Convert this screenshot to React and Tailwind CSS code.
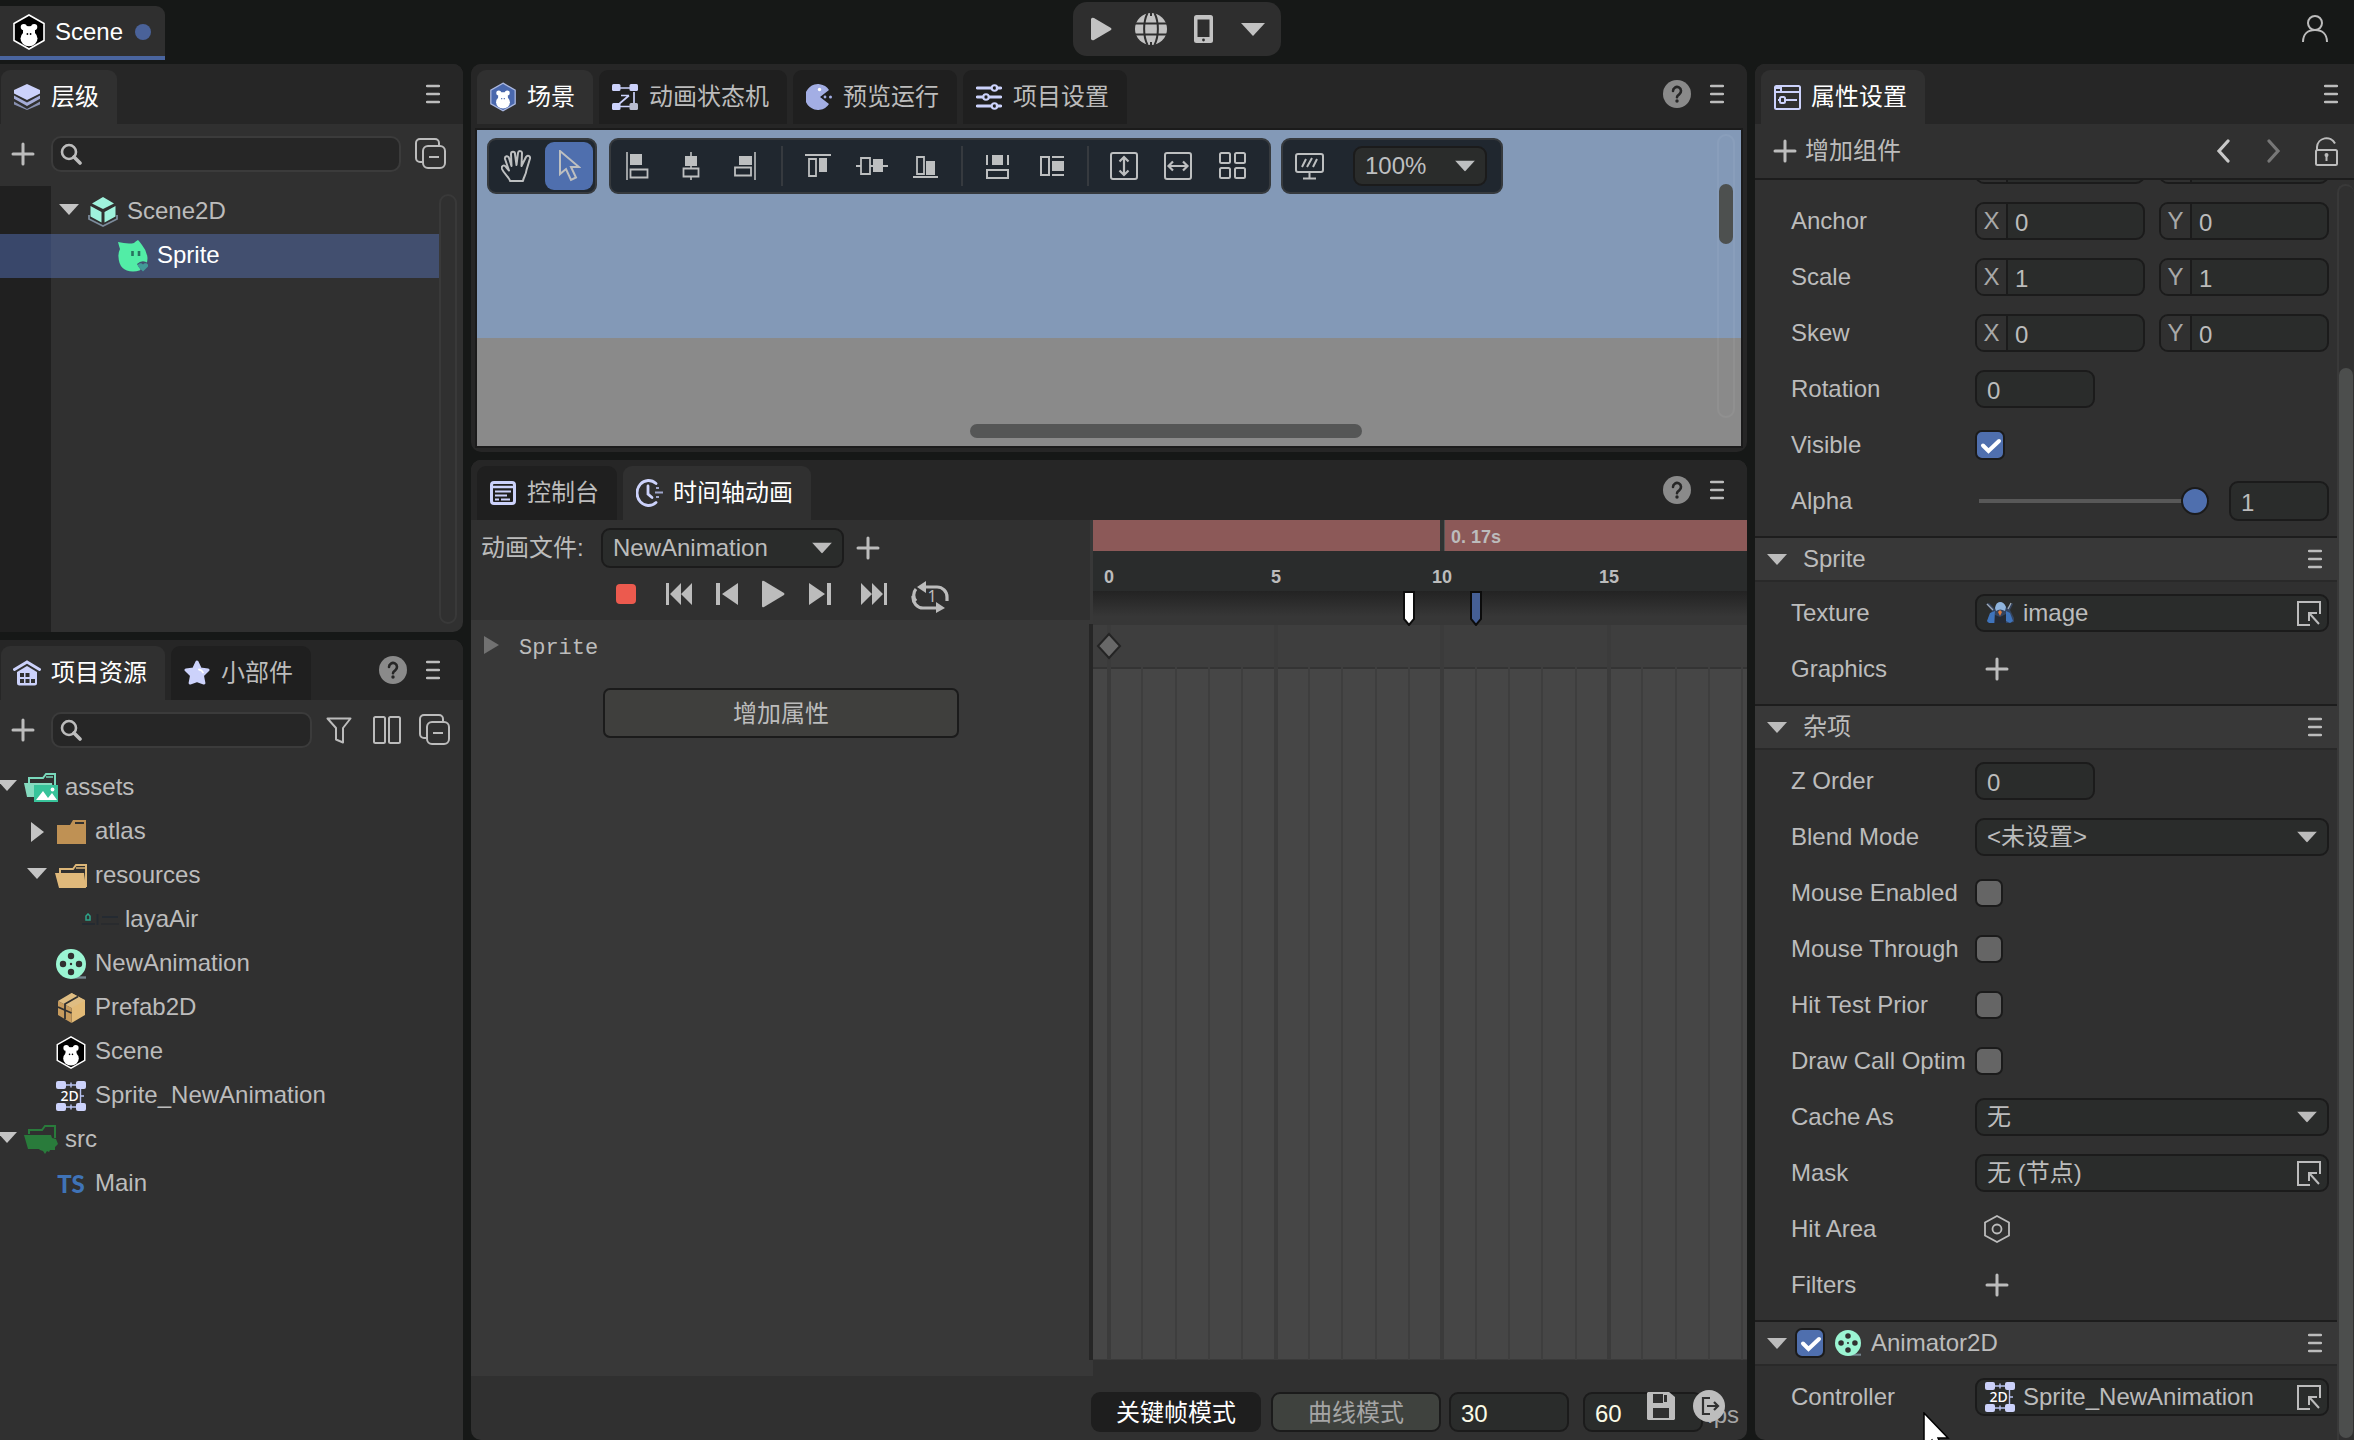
import React, { useId } from 'react';

/* ---------- icons ---------- */

function Svg({ w, h, children, className = '' }) {
  return (
    <svg width={w} height={h} viewBox={`0 0 ${w} ${h}`} fill="none" className={`shrink-0 ${className}`} aria-hidden="true">
      {children}
    </svg>
  );
}

const DownArrow = ({ className = '' }) => (
  <Svg w={20} h={11} className={className}><path d="M0 0h20L10 11z" fill="currentColor" /></Svg>
);
const RightArrow = () => (
  <Svg w={13} h={20}><path d="M0 0v20l13-10z" fill="currentColor" /></Svg>
);
const Plus = () => (
  <Svg w={24} h={24}><path d="M12 2v20M2 12h20" stroke="currentColor" strokeWidth="3" strokeLinecap="round" /></Svg>
);
const Menu = () => (
  <Svg w={14} h={20}><path d="M1 2h12M1 10h12M1 18h12" stroke="currentColor" strokeWidth="2.4" strokeLinecap="round" /></Svg>
);
const Help = () => (
  <Svg w={28} h={28}>
    <circle cx="14" cy="14" r="14" fill="#8a8a8a" />
    <path d="M10 11a4 4 0 1 1 6.200 3.300c-1.500 1-2.200 1.500-2.200 3" stroke="#262626" strokeWidth="2.6" strokeLinecap="round" />
    <circle cx="14" cy="21" r="1.700" fill="#262626" />
  </Svg>
);
const Search = () => (
  <Svg w={22} h={22}>
    <circle cx="9" cy="9" r="7" stroke="currentColor" strokeWidth="2.6" />
    <path d="M14 14l6 6" stroke="currentColor" strokeWidth="3.600" strokeLinecap="round" />
  </Svg>
);
const Collapse = () => (
  <Svg w={32} h={32}>
    <path d="M7 24H5a4 4 0 0 1-4-4V5a4 4 0 0 1 4-4h15a4 4 0 0 1 4 4v2" stroke="currentColor" strokeWidth="2" />
    <rect x="8" y="8" width="22" height="22" rx="5" stroke="currentColor" strokeWidth="2" />
    <path d="M14 19h10" stroke="currentColor" strokeWidth="2.200" />
  </Svg>
);
const Filter = () => (
  <Svg w={26} h={27}><path d="M1.500 1.500h23L17 11v14.500l-7-3V11z" stroke="currentColor" strokeWidth="2" strokeLinejoin="round" /></Svg>
);
const Columns = () => (
  <Svg w={28} h={28}>
    <rect x="1" y="1" width="11" height="26" rx="1.500" stroke="currentColor" strokeWidth="2" />
    <rect x="16" y="1" width="11" height="26" rx="1.500" stroke="currentColor" strokeWidth="2" />
  </Svg>
);

function Monkey({ w = 30, h = 33, fill = '#000', stroke = '#fff' }) {
  return (
    <svg width={w} height={h} viewBox="0 0 32 36" fill="none" className="shrink-0" aria-hidden="true">
      <path d="M16 1l15 8.500v17L16 35 1 26.500v-17z" fill={fill} stroke={stroke} strokeWidth="1.600" />
      <circle cx="10.800" cy="13" r="3.100" fill="#fff" />
      <circle cx="21.200" cy="13" r="3.100" fill="#fff" />
      <path d="M11 11.500q5 1.500 10 0l1 5v5H10v-5z" fill="#fff" />
      <ellipse cx="16" cy="24.500" rx="8.500" ry="7.700" fill="#fff" />
      <circle cx="14.400" cy="20" r="0.900" fill={fill} />
      <circle cx="17.600" cy="20" r="0.900" fill={fill} />
    </svg>
  );
}

const Layers = () => (
  <Svg w={26} h={26}>
    <path d="M0 17.500l13 7.500 13-7.500v3L13 26 0 20.500z" fill="#8890b0" />
    <path d="M0 11.500l13 7 13-7v3.200L13 22 0 14.700z" fill="#a5acd6" />
    <path d="M13 0l13 6v3.500L13 16 0 9.500V6z" fill="#ccd2fb" />
  </Svg>
);
const House = () => (
  <Svg w={28} h={26}>
    <path d="M1.500 9.500L14 2l12.500 7.500" stroke="#ccd2fb" strokeWidth="3" strokeLinecap="round" />
    <path d="M14 6l10 6v11a2.500 2.500 0 0 1-2.500 2.500h-15A2.500 2.500 0 0 1 4 23V12z" fill="#ccd2fb" />
    <path d="M7 13h4v4H7zM12.500 13h4v4h-4zM7 19h4v4H7zM12.500 19h4v4h-4zM18 19h4v4h-4z" fill="#303030" />
  </Svg>
);
const Star = () => (
  <Svg w={26} h={26}>
    <path d="M13 2l3.300 7 7.700 1-5.600 5.300 1.500 7.700L13 20.500 6.100 23l1.500-7.700L2 10l7.700-1z" fill="#ccd2fb" stroke="#ccd2fb" strokeWidth="3" strokeLinejoin="round" />
    <path d="M15 9.500q3 .5 4 3" stroke="#fff" strokeWidth="1.800" strokeLinecap="round" />
  </Svg>
);
const StateMachine = () => (
  <Svg w={26} h={26}>
    <path d="M8 4h11M8 22.500h11M22 8v11M17 11.500H9M17 11.500L7 20" stroke="#ccd2fb" strokeWidth="1.700" />
    <rect x="0" y="0" width="8.500" height="7" rx="1.500" fill="#ccd2fb" />
    <rect x="17.500" y="0" width="8.500" height="7" rx="1.500" fill="#ccd2fb" />
    <rect x="0" y="19" width="8.500" height="7" rx="1.500" fill="#ccd2fb" />
    <rect x="17.500" y="19" width="8.500" height="7" rx="1.500" fill="#b8bccf" />
  </Svg>
);
const Pac = () => (
  <Svg w={26} h={26}>
    <path d="M23 6A13 13 0 1 0 23 20L14 13z" fill="#a3aee4" />
    <circle cx="13.500" cy="5.500" r="1.700" fill="#fff" />
    <circle cx="19" cy="13" r="1.400" fill="#a3aee4" />
    <circle cx="24.500" cy="13" r="1.500" fill="#a3aee4" />
  </Svg>
);
const Sliders = () => (
  <Svg w={26} h={26}>
    <path d="M1.300 4H15M21 4h3.700M1.300 13H7M13 13h11.700M1.300 22H15M21 22h3.700" stroke="#ccd2fb" strokeWidth="2.800" strokeLinecap="round" />
    <circle cx="18.500" cy="4" r="2.800" stroke="#ccd2fb" strokeWidth="2" />
    <circle cx="10" cy="13" r="2.800" stroke="#ccd2fb" strokeWidth="2" />
    <circle cx="18.500" cy="22" r="2.800" stroke="#ccd2fb" strokeWidth="2" />
  </Svg>
);
const ConsoleIcon = () => (
  <Svg w={26} h={24}>
    <rect x="1.500" y="1.500" width="23" height="21" rx="2.500" stroke="#ccd2fb" strokeWidth="3" />
    <path d="M1 6h24" stroke="#ccd2fb" strokeWidth="2.400" />
    <path d="M5 10.500h16M5 14.500h12M5 18.500h4M11 18.500h9" stroke="#ccd2fb" strokeWidth="1.800" />
  </Svg>
);
const ClockIcon = () => (
  <Svg w={27} h={28}>
    <path d="M20 4.500A11.500 12.500 0 1 0 20 23.500" stroke="#ccd2fb" strokeWidth="2.800" strokeLinecap="round" />
    <path d="M12 7v8l4 3.500" stroke="#ccd2fb" strokeWidth="2.800" strokeLinecap="round" />
    <path d="M20 9h3M19 13.500h8M20 18h3" stroke="#9fa6cc" strokeWidth="2" />
  </Svg>
);
const PropsIcon = () => (
  <Svg w={27} h={25}>
    <rect x="1" y="1" width="25" height="23" rx="1.500" stroke="#ccd2fb" strokeWidth="2" />
    <path d="M1 7h25M1 3h6v4H1z" stroke="#ccd2fb" strokeWidth="2" />
    <path d="M4 15h2M11 15h12" stroke="#ccd2fb" strokeWidth="2.200" />
    <rect x="6" y="12" width="5" height="6" rx="1.500" stroke="#ccd2fb" strokeWidth="2" />
  </Svg>
);

const Cube = () => (
  <Svg w={30} h={30}>
    <path d="M1 18v4l14 7 14-7v-4" stroke="#7b8a9a" strokeWidth="1.800" />
    <path d="M15 0l11 6.500L15 12 4 6.500zM2.500 9l11 6v10.500l-11-6zM27.500 9l-11 6v10.500l11-6z" fill="#9ff2dc" />
  </Svg>
);
const SpriteIcon = () => (
  <Svg w={30} h={32}>
    <path d="M0 2q6 1 11 1.500 3 0 5-.5 2-2 4-3 2 2 4 5 5 6 5.500 13 0 13-14.500 13.500Q1 31 0.500 17 0 13 2 9 1 6 0 2z" fill="#52eda6" />
    <path d="M19 24q5-5 11-1v5l-6 4z" fill="#424f6f" />
    <path d="M25 31.500l-5-5c-1-3 3-4.500 5-2 2-2.500 6-1 5 2z" fill="#429a98" />
    <path d="M14.500 11v5M21 11v5" stroke="#28725f" strokeWidth="2.600" />
  </Svg>
);
const AssetsFolder = () => (
  <Svg w={34} h={30}>
    <path d="M5 10V5h14l3-4h9v12" stroke="#79d8bb" strokeWidth="2" />
    <path d="M22 4h7" stroke="#79d8bb" strokeWidth="1.500" />
    <path d="M0 10h28l2 14H3z" fill="#86dabf" />
    <rect x="10" y="12" width="24" height="17" fill="#38c39a" />
    <path d="M12 27l7-9 5 7 4-5 5 7z" fill="#fff" />
    <circle cx="28.500" cy="16.500" r="1.900" fill="#fff" />
  </Svg>
);
const ClosedFolder = () => (
  <Svg w={29} h={24}>
    <path d="M0 5h13l3-5h13v24H0z" fill="#bf9154" />
    <path d="M18 3h9" stroke="#303030" strokeWidth="2" />
  </Svg>
);
const OpenFolder = () => (
  <Svg w={32} h={24}>
    <path d="M5 9V5h13l3-4h10v22" stroke="#dcb678" strokeWidth="2" />
    <path d="M21 4h9" stroke="#dcb678" strokeWidth="1.500" />
    <path d="M0 9h29l2 15H4z" fill="#e0b97b" />
  </Svg>
);
const SrcFolder = () => (
  <Svg w={34} h={30}>
    <path d="M5 9V5h13l3-4h10v12" stroke="#297b3b" strokeWidth="2" />
    <path d="M0 10h27l1 3 4 1 2 5-3 3v3h-5l-1 2-2-1-2 3-2-3-3-1-1-1H4z" fill="#297b3b" />
  </Svg>
);
const LayaAir = () => (
  <Svg w={38} h={14}>
    <path d="M4 6V3l2-2 2 2v4H4V6" stroke="#2ea58a" strokeWidth="1.500" />
    <path d="M0 11h13M15.500 1v11M20 4h16" stroke="#242a31" strokeWidth="2" />
    <path d="M19 11h18" stroke="#292b2e" strokeWidth="2" />
  </Svg>
);
function Reel({ size = 30 }) {
  return (
    <svg width={size} height={size} viewBox="0 0 30 30" className="shrink-0" aria-hidden="true">
      <path d="M16 28.500h14" stroke="#74868f" strokeWidth="2.400" />
      <circle cx="15" cy="15" r="15" fill="#9bf5d3" />
      <g fill="#303030">
        <circle cx="15" cy="7" r="3.200" /><circle cx="15" cy="23" r="3.200" />
        <circle cx="7" cy="15" r="3.200" /><circle cx="23" cy="15" r="3.200" />
        <circle cx="15" cy="15" r="1.200" />
      </g>
    </svg>
  );
}
const Box = () => (
  <Svg w={27} h={30}>
    <path d="M13.500 0L27 7v15l-13.500 8z" fill="#e2ba76" />
    <path d="M0 8l13.500 7v15L0 22z" fill="#c79b5d" />
    <path d="M13.500 0L27 7.500 13.500 15 0 8z" fill="#dfbd82" />
    <path d="M20 3.500L7 11v15M0 14l13.500 6" stroke="#303030" strokeWidth="1.800" />
  </Svg>
);
const TwoD = () => (
  <Svg w={30} h={30}>
    <path d="M9 4h12M9 26h12M24.500 8v14M15 1.500v5M15 23.500v5M24 15h4" stroke="#b8c3f2" strokeWidth="1.400" />
    <rect x="0" y="0" width="10" height="8" rx="2" fill="#ccd2fb" />
    <rect x="20" y="0" width="10" height="8" rx="2" fill="#ccd2fb" />
    <rect x="0" y="22" width="10" height="8" rx="2" fill="#ccd2fb" />
    <rect x="20" y="22" width="10" height="8" rx="2" fill="#ccd2fb" />
    <text x="13.500" y="20" textAnchor="middle" fontSize="14" fontFamily="'Noto Sans', sans-serif" fontWeight="500" fill="#fff">2D</text>
  </Svg>
);
const Pick = () => (
  <Svg w={24} h={25}>
    <path d="M13 24H1V1h22v12" stroke="currentColor" strokeWidth="2" />
    <path d="M12 20v-8h8M13 13l9 10" stroke="currentColor" strokeWidth="2" />
  </Svg>
);
const Hexagon = () => (
  <Svg w={26} h={28}>
    <path d="M13 1l12 6.500v13L13 27 1 20.500v-13z" stroke="currentColor" strokeWidth="1.800" />
    <circle cx="13" cy="14" r="4.500" stroke="currentColor" strokeWidth="1.800" />
  </Svg>
);
const Avatar = () => (
  <Svg w={28} h={22}>
    <path d="M0 2l3-1 4 4 2 2q2-7 5-7t6 6l3-2 3-3 1 1-3 6 4 8 0 4-5 1H5l-4-1 2-6 3-5z" fill="#34445f" />
    <path d="M9 6q1-6 5-6t6 5l-1 4q-5-3-9 0z" fill="#8fb4dd" />
    <path d="M1 19l3-8 5-2-1 12H3zM27 19l-3-8-4-2 0 10 4 2z" fill="#3f74bb" />
    <path d="M9 13l5 2 6-3v9H9z" fill="#252a33" />
    <path d="M14 8l2 2-2 4-2-4z" fill="#dd7a3c" />
    <path d="M1 2l6 6M22 7l3-6" stroke="#a3adb8" strokeWidth="1.300" />
  </Svg>
);

/* ---------- shared controls ---------- */

const fieldBox = 'rounded-[9px] border-2 border-[#1b1b1b] bg-[#2a2c2b] outline-none';

function IconButton({ label, children, className = '' }) {
  return (
    <button type="button" aria-label={label} className={`flex shrink-0 items-center justify-center ${className}`}>
      {children}
    </button>
  );
}

function Tab({ icon, children, active }) {
  return (
    <button
      type="button"
      role="tab"
      aria-selected={!!active}
      className={`flex h-[54px] items-center gap-2.5 rounded-t-[9px] pl-3 pr-[18px] ${active ? 'bg-[#303030] text-white' : 'bg-[#1f1f1f]'}`}
    >
      <span className="flex w-7 shrink-0 justify-center">{icon}</span>
      {children}
    </button>
  );
}

function PanelHeader({ children, help, className = 'pl-1.5 pr-[23px]' }) {
  return (
    <header className={`flex h-[60px] shrink-0 items-end bg-[#262626] ${className}`}>
      <div role="tablist" className="flex gap-1.5">{children}</div>
      <div className="ml-auto flex h-full items-center gap-[19px]">
        {help && <IconButton label="帮助"><Help /></IconButton>}
        <IconButton label="菜单"><Menu /></IconButton>
      </div>
    </header>
  );
}

function SearchBox({ label }) {
  return (
    <div className="flex h-9 min-w-0 flex-1 items-center gap-2 rounded-[10px] border-2 border-[#3b3b3b] bg-[#262626] pl-[7px]">
      <Search />
      <input type="text" aria-label={label} className="w-full min-w-0 bg-transparent pr-2 outline-none" />
    </div>
  );
}

function Select({ value, id, label, className = '' }) {
  return (
    <div className={`relative flex ${className}`}>
      <select id={id} aria-label={label} className={`h-full w-full appearance-none pl-2.5 pr-9 ${fieldBox}`}>
        <option>{value}</option>
      </select>
      <DownArrow className="pointer-events-none absolute right-3 top-1/2 -translate-y-1/2" />
    </div>
  );
}

function Checkbox({ id, label, checked }) {
  return (
    <span className="relative inline-flex shrink-0">
      <input
        id={id}
        type="checkbox"
        aria-label={label}
        defaultChecked={checked}
        className="peer size-7 appearance-none rounded-[7px] border-2 border-[#1b1b1b] bg-[#656565] checked:size-[30px] checked:bg-[#4f6fae]"
      />
      <svg viewBox="0 0 30 30" className="pointer-events-none absolute inset-0 hidden size-[30px] peer-checked:block" aria-hidden="true">
        <path d="M8 15.500l5.500 5.500L24 11" fill="none" stroke="#fff" strokeWidth="4" strokeLinecap="round" />
      </svg>
    </span>
  );
}

/* ---------- trees ---------- */

const indents = ['pl-0', 'pl-[30px]', 'pl-[60px]'];

function TreeRow({ level = 0, arrow, icon, children, selected }) {
  return (
    <li className={`flex h-11 items-center gap-3 ${indents[level]} ${selected ? 'bg-[#424f6f] text-white' : ''}`}>
      <span className="flex w-3.5 shrink-0 justify-center text-[#c4c4c4]">
        {arrow === 'down' && <DownArrow className="-mt-1.5" />}
        {arrow === 'right' && <RightArrow />}
      </span>
      <span className="-mr-[3px] flex w-[30px] shrink-0 justify-center">{icon}</span>
      <span className="pb-0.5">{children}</span>
    </li>
  );
}

function Hierarchy() {
  return (
    <section className="flex h-[568px] shrink-0 flex-col overflow-hidden rounded-r-[10px] bg-[#303030]">
      <PanelHeader className="pl-px pr-[23px]">
        <Tab icon={<Layers />} active>层级</Tab>
      </PanelHeader>
      <div className="flex h-[62px] shrink-0 items-center pb-0.5 pl-[11px] pr-4">
        <IconButton label="新建" className="mr-4"><Plus /></IconButton>
        <SearchBox label="搜索节点" />
        <IconButton label="全部折叠" className="ml-3.5"><Collapse /></IconButton>
      </div>
      <div className="flex flex-1">
        <div className="w-[51px] shrink-0 bg-[#202020] pt-12">
          <div className="h-11 bg-[#39476a]" />
        </div>
        <ul className="flex-1 pt-1">
          <li>
            <div className="pl-[11px]"><ul><TreeRow arrow="down" icon={<Cube />}>Scene2D</TreeRow></ul></div>
          </li>
          <li className="bg-[#424f6f]">
            <div className="pl-[11px]"><ul><TreeRow level={1} icon={<SpriteIcon />} selected>Sprite</TreeRow></ul></div>
          </li>
        </ul>
        <div className="mb-2 mr-1.5 mt-2 w-[18px] rounded-full border-2 border-[#393939]" />
      </div>
    </section>
  );
}

function Project() {
  return (
    <section className="flex min-h-0 flex-1 flex-col overflow-hidden rounded-tr-[10px] bg-[#303030]">
      <PanelHeader help className="pl-px pr-[23px]">
        <Tab icon={<House />} active>项目资源</Tab>
        <Tab icon={<Star />}>小部件</Tab>
      </PanelHeader>
      <div className="flex h-[62px] shrink-0 items-center pb-0.5 pl-[11px] pr-3">
        <IconButton label="新建" className="mr-4"><Plus /></IconButton>
        <SearchBox label="搜索资源" />
        <IconButton label="筛选" className="ml-3.5"><Filter /></IconButton>
        <IconButton label="布局" className="ml-[21px]"><Columns /></IconButton>
        <IconButton label="全部折叠" className="ml-[18px]"><Collapse /></IconButton>
      </div>
      <ul className="pt-1">
        <TreeRow arrow="down" icon={<AssetsFolder />}>assets</TreeRow>
        <TreeRow level={1} arrow="right" icon={<ClosedFolder />}>atlas</TreeRow>
        <TreeRow level={1} arrow="down" icon={<OpenFolder />}>resources</TreeRow>
        <TreeRow level={2} icon={<LayaAir />}>layaAir</TreeRow>
        <TreeRow level={1} icon={<Reel />}>NewAnimation</TreeRow>
        <TreeRow level={1} icon={<Box />}>Prefab2D</TreeRow>
        <TreeRow level={1} icon={<Monkey />}>Scene</TreeRow>
        <TreeRow level={1} icon={<TwoD />}>Sprite_NewAnimation</TreeRow>
        <TreeRow arrow="down" icon={<SrcFolder />}>src</TreeRow>
        <TreeRow level={1} icon={<span className="font-['Lato',sans-serif] font-black text-[#3f73b7]">TS</span>}>Main</TreeRow>
      </ul>
    </section>
  );
}

/* ---------- scene view ---------- */

const alignGroups = [
  [
    ['左对齐', <><path d="M1 0v28" stroke="currentColor" strokeWidth="1.600" /><path d="M4 2h12v11H4z" fill="currentColor" /><path d="M4.500 17.500h17v8h-17z" stroke="currentColor" strokeWidth="1.800" /></>, 24],
    ['水平居中', <><path d="M9 0v28" stroke="currentColor" strokeWidth="1.600" /><path d="M3 4h12v10H3z" fill="currentColor" /><path d="M1.500 16.500h15v8h-15z" fill="#20272f" stroke="currentColor" strokeWidth="1.800" /></>, 20],
    ['右对齐', <><path d="M21 0v28" stroke="currentColor" strokeWidth="1.600" /><path d="M5 4h13v9H5z" fill="currentColor" /><path d="M1 15.500h16v8H1z" stroke="currentColor" strokeWidth="1.800" /></>, 24],
  ],
  [
    ['顶对齐', <><path d="M0 3h26" stroke="currentColor" strokeWidth="2" /><path d="M14 6h8v14h-8z" fill="currentColor" /><path d="M4 7h7v17H4z" stroke="currentColor" strokeWidth="1.800" /></>, 26],
    ['垂直居中', <><path d="M0 14h32" stroke="currentColor" strokeWidth="1.800" /><path d="M17 7h10v13H17z" fill="currentColor" /><path d="M5 6h9v16H5z" fill="#20272f" stroke="currentColor" strokeWidth="1.800" /></>, 32],
    ['底对齐', <><path d="M0 25h25" stroke="currentColor" strokeWidth="2" /><path d="M13 9h9v14h-9z" fill="currentColor" /><path d="M4 5h7v17H4z" stroke="currentColor" strokeWidth="1.800" /></>, 26],
  ],
  [
    ['水平分布', <><path d="M1 3v10M22 3v10" stroke="currentColor" strokeWidth="2" /><path d="M6 3h11v10H6z" fill="currentColor" /><path d="M1 18h21v8H1z" stroke="currentColor" strokeWidth="2" /></>, 24],
    ['垂直分布', <><path d="M12 5h12M12 23h12" stroke="currentColor" strokeWidth="2" /><path d="M12 9h12v10H12z" fill="currentColor" /><path d="M1 5h8v18H1z" stroke="currentColor" strokeWidth="2" /></>, 24],
  ],
  [
    ['等高', <><rect x="1" y="1" width="26" height="26" rx="2" stroke="currentColor" strokeWidth="2" /><path d="M14 6v16M9.500 9.500L14 5l4.500 4.500M9.500 18.500L14 23l4.500-4.500" stroke="currentColor" strokeWidth="2.200" /></>, 28],
    ['等宽', <><rect x="1" y="1" width="26" height="26" rx="2" stroke="currentColor" strokeWidth="2" /><path d="M5 14h18M9 9.500L4.500 14 9 18.500M19 9.500l4.500 4.500-4.500 4.500" stroke="currentColor" strokeWidth="2.200" /></>, 28],
    ['网格', <><g stroke="currentColor" strokeWidth="2"><rect x="1" y="1" width="10" height="10" rx="1.500" /><rect x="16" y="1" width="10" height="10" rx="1.500" /><rect x="1" y="16" width="10" height="10" rx="1.500" /><rect x="16" y="16" width="10" height="10" rx="1.500" /></g></>, 27],
  ],
];

const toolBox = 'flex h-14 items-center rounded-[9px] border-2 border-[#363a3e] bg-[#20272f] text-[#bdbfc0]';

function SceneView() {
  return (
    <section className="flex h-[388px] shrink-0 flex-col overflow-hidden rounded-[10px] bg-[#262626]">
      <PanelHeader help>
        <Tab icon={<Monkey w={26} h={34} fill="#4a68ad" stroke="#a9b6de" />} active>场景</Tab>
        <Tab icon={<StateMachine />}>动画状态机</Tab>
        <Tab icon={<Pac />}>预览运行</Tab>
        <Tab icon={<Sliders />}>项目设置</Tab>
      </PanelHeader>
      <div className="relative mx-1 mb-1 mt-1 flex flex-1 flex-col border-2 border-[#1b1b1b]">
        <div className="h-[208px] shrink-0 bg-[#8399b7] p-2 pl-2.5">
          <div className="flex" role="toolbar" aria-label="场景工具">
            <div className={`${toolBox} mr-3 pr-0.5`}>
              <IconButton label="移动画布" className="h-12 w-14">
                <Svg w={32} h={32}>
                  <path d="M9 31c0-3-6-7-8-12-1-3 2-5 4-2l3 3.500L4 9c-.5-3 3-4 4-1l2.500 8L10 4c0-3 4-3 4 0l1.500 11L17 3c.5-3 4-2 4 0l-.5 13L25 7c1.500-2.500 4.500-1 4 1.500L25.500 20c-.5 5-3 7-3.500 11z" stroke="currentColor" strokeWidth="2" strokeLinejoin="round" />
                </Svg>
              </IconButton>
              <IconButton label="选择" className="h-12 w-12 rounded-[9px] bg-[#4f6fae]">
                <Svg w={24} h={32}>
                  <path d="M3 1v23l6-5 5 11 5-2.500-5-10.500h8z" stroke="currentColor" strokeWidth="2" />
                </Svg>
              </IconButton>
            </div>
            <div className={`${toolBox} mr-2.5 pr-2.5`}>
              {alignGroups.map((group, g) => (
                <React.Fragment key={g}>
                  {g > 0 && <div className="mx-2 h-10 w-0.5 bg-[#363a3f]" />}
                  {group.map(([label, art, w]) => (
                    <IconButton key={label} label={label} className="h-12 w-[54px]"><Svg w={w} h={28}>{art}</Svg></IconButton>
                  ))}
                </React.Fragment>
              ))}
            </div>
            <div className={`${toolBox} pl-3 pr-3.5`}>
              <IconButton label="显示" className="mr-[29px]">
                <Svg w={29} h={27}>
                  <rect x="1" y="1" width="27" height="18" rx="2" stroke="currentColor" strokeWidth="2" />
                  <path d="M7 14l4-8M12 14l5-9M18 14l4-8M14.500 19v6M8 25.500h13" stroke="currentColor" strokeWidth="2" />
                </Svg>
              </IconButton>
              <Select value="100%" label="缩放" className="h-10 w-[134px]" />
            </div>
          </div>
        </div>
        <div className="flex-1 bg-[#8a8a8a]" />
        <div className="absolute bottom-7 right-1.5 top-1 w-[18px] rounded-full border-2 border-white/5" />
        <div className="absolute right-2 top-[54px] h-[60px] w-3.5 rounded-full bg-[#4d504f]" />
        <div className="absolute bottom-2 left-[39%] h-3.5 w-[31%] rounded-full bg-[#555656]" />
      </div>
    </section>
  );
}

/* ---------- timeline ---------- */

const FRAME = 100 / 3;
const ORIGIN = 16;
const frameX = (n) => Math.round(ORIGIN + n * FRAME);

function Marker({ frame, color }) {
  return (
    <svg width="12" height="35" viewBox="0 0 12 35" className="absolute top-0 -translate-x-1/2" style={{ left: frameX(frame) }} aria-hidden="true">
      <path d="M1 1h10v27l-5 6-5-6z" fill={color} stroke="#0c0c0c" strokeWidth="2" />
    </svg>
  );
}

const transport = [
  ['录制', 'mr-[30px]', <Svg w={20} h={20} key="r"><rect width="20" height="20" rx="4" fill="#ec5a4e" /></Svg>],
  ['首帧', 'mr-6', <Svg w={26} h={24} key="f"><path d="M0 1h3v22H0zM15 1v22L4 12zM26 1v22L15 12z" fill="currentColor" /></Svg>],
  ['上一帧', 'mr-6', <Svg w={22} h={24} key="p"><path d="M0 1h4v22H0zM22 1v22L6 12z" fill="currentColor" /></Svg>],
  ['播放', 'mr-6', <Svg w={23} h={28} key="l"><path d="M0 2q0-2 2-1l20 12q1 1 0 2L2 27q-2 1-2-1z" fill="currentColor" /></Svg>],
  ['下一帧', 'mr-[30px]', <Svg w={22} h={24} key="n"><path d="M18 1h4v22h-4zM0 1v22l16-11z" fill="currentColor" /></Svg>],
  ['末帧', 'mr-6', <Svg w={26} h={24} key="e"><path d="M23 1h3v22h-3zM0 1v22l11-11zM11 1v22l11-11z" fill="currentColor" /></Svg>],
];

function Timeline() {
  return (
    <section className="flex min-h-0 flex-1 flex-col overflow-hidden rounded-[10px] bg-[#303030]">
      <PanelHeader help>
        <Tab icon={<ConsoleIcon />}>控制台</Tab>
        <Tab icon={<ClockIcon />} active>时间轴动画</Tab>
      </PanelHeader>
      <div className="flex min-h-0 flex-1">
        <div className="flex w-[622px] shrink-0 flex-col">
          <div className="h-[100px] shrink-0 border-r-[3px] border-[#383838] pl-2.5 pt-2">
            <div className="flex h-10 items-center">
              <label htmlFor="clip" className="w-[120px]">动画文件:</label>
              <Select id="clip" value="NewAnimation" className="h-10 w-[243px]" />
              <IconButton label="新建动画" className="ml-3"><Plus /></IconButton>
            </div>
            <div className="mt-2 flex h-9 items-center pl-[135px]">
              {transport.map(([label, gap, icon]) => (
                <IconButton key={label} label={label} className={gap}>{icon}</IconButton>
              ))}
              <IconButton label="循环次数">
                <Svg w={38} h={32} className="mt-1.5">
                  <path d="M5 20a9 9 0 0 1 0-12M13 6h13a10 10 0 0 1 10 10v4M2 15a10 11 0 0 0 10 12h14" stroke="currentColor" strokeWidth="3.200" />
                  <path d="M6 6l9-6v12zM34 27l-9-6v11z" fill="currentColor" />
                  <text x="21" y="21" textAnchor="middle" fontSize="16" fontFamily="'Noto Sans', sans-serif" fill="currentColor">1</text>
                </Svg>
              </IconButton>
            </div>
          </div>
          <div className="flex min-h-0 flex-1 bg-[#383838]">
            <div className="flex-1">
              <div className="flex h-[54px] items-center pl-[13px]">
                <Svg w={15} h={18} className="-mt-1"><path d="M0 0v18l15-9z" fill="#717171" /></Svg>
                <span className="ml-5 pt-1 font-['Liberation_Mono',monospace] text-[22px]">Sprite</span>
              </div>
              <button type="button" className="ml-[132px] mt-3.5 flex h-[50px] w-[356px] items-center justify-center rounded-[7px] border-2 border-[#1b1b1b] bg-[#3f3f3d] pt-0.5">增加属性</button>
            </div>
            <div className="mb-4 mt-1 w-1 bg-[#262626]" />
          </div>
          <div className="h-16 shrink-0" />
        </div>

        <div className="flex min-w-0 flex-1 flex-col">
          <div className="relative h-[31px] shrink-0 bg-[#8c5958] text-[18px] font-bold">
            <div className="absolute inset-y-0 w-[5px] border-r border-[#555] bg-[#2f3332]" style={{ left: frameX(10) - 2 }} />
            <span className="absolute top-0.5 leading-[31px]" style={{ left: frameX(10) + 9 }}>0. 17s</span>
          </div>
          <div className="relative h-10 shrink-0 bg-[#2a2c2c] text-[18px] font-bold">
            {[0, 5, 10, 15].map((n) => (
              <span key={n} className="absolute bottom-1 -translate-x-1/2 leading-5" style={{ left: frameX(n) }}>{n}</span>
            ))}
          </div>
          <div className="relative z-10 h-[34px] shrink-0 bg-linear-to-b from-[#232323] to-[#373737] to-75%">
            <Marker frame={9} color="#ffffff" />
            <Marker frame={11} color="#455f95" />
          </div>
          <div className="relative flex min-h-0 flex-1 flex-col overflow-hidden">
            <div className="h-11 shrink-0 border-b-2 border-[#343434] bg-[#3e3e3e]" />
            <div className="flex-1 border-b border-[#3a3a3a] bg-[#464646]" />
            {Array.from({ length: 20 }, (_, n) => (
              <div key={n} className={`absolute inset-y-0 -translate-x-1/2 ${n % 5 ? 'w-0.5 bg-[#3e3e3e]' : 'w-1 bg-[#3b3b3b]'}`} style={{ left: frameX(n) }} />
            ))}
            <svg width="26" height="28" viewBox="0 0 26 28" className="absolute top-[7px] -translate-x-1/2" style={{ left: frameX(0) }} aria-hidden="true">
              <path d="M13 2l11 12-11 12L2 14z" fill="#686868" stroke="#242424" strokeWidth="2" />
            </svg>
          </div>
          <div className="-ml-0.5 flex h-20 shrink-0 items-start pt-8">
            <button type="button" className="h-10 w-[170px] shrink-0 rounded-[9px] bg-[#1e1e1e] pt-0.5 text-white">关键帧模式</button>
            <button type="button" className="ml-2.5 h-10 w-[170px] shrink-0 rounded-[9px] border-2 border-[#1b1b1b] bg-[#3f423e] pt-0.5 text-[#a5a5a5]">曲线模式</button>
            <input type="text" aria-label="帧数" defaultValue="30" className={`ml-2 h-10 w-[120px] shrink-0 pl-2.5 pt-1 text-[#fbfbe6] ${fieldBox}`} />
            <div className="relative ml-3.5 flex">
              <input type="text" aria-label="帧率" defaultValue="60" className={`h-10 w-[120px] shrink-0 pl-2.5 pt-1 text-[#fbfbe6] ${fieldBox}`} />
              <span className="ml-1 leading-[46px] text-[#a5a5a5]">fps</span>
              <IconButton label="保存" className="absolute left-16 top-0">
                <Svg w={28} h={28}>
                  <path d="M1 0h21l6 5v22l-1 1H1l-1-1V1z" fill="#bdbdbd" />
                  <path d="M6 2h10v9H6zM17 3h3v7h-3zM6 16h16v10H6z" fill="#303030" />
                </Svg>
              </IconButton>
              <IconButton label="导出" className="absolute -top-0.5 left-[110px]">
                <Svg w={32} h={32}>
                  <circle cx="16" cy="16" r="16" fill="#bdbdbd" />
                  <path d="M17 8h-7v16h7M14 16h11M21 12l4 4-4 4" stroke="#303030" strokeWidth="2.200" />
                </Svg>
              </IconButton>
            </div>
          </div>
        </div>
      </div>
    </section>
  );
}

/* ---------- inspector ---------- */

function Row({ label, id, children }) {
  return (
    <div className="flex h-14 items-center pl-9 pr-2">
      <label htmlFor={id} className="w-[184px] shrink-0 whitespace-nowrap">{label}</label>
      <div className="flex min-w-0 flex-1 items-center">{children}</div>
    </div>
  );
}

function VecRow({ label, x, y }) {
  const id = useId();
  const axis = (name, value, inputId) => (
    <div className={`flex h-[38px] overflow-hidden ${fieldBox}`}>
      <span className="flex w-[31px] shrink-0 items-center justify-center border-r-2 border-[#1b1b1b] bg-[#303030] text-[#a8a8a8]">{label && name}</span>
      <input id={inputId} type="text" aria-label={`${label} ${name}`} defaultValue={value} className="w-full min-w-0 bg-transparent pl-[7px] pt-1 outline-none" />
    </div>
  );
  return (
    <Row label={label} id={id}>
      <div className="grid flex-1 grid-cols-2 gap-3.5">
        {axis('X', x, id)}
        {axis('Y', y)}
      </div>
    </Row>
  );
}

function TextRow({ label, value }) {
  const id = useId();
  return (
    <Row label={label} id={id}>
      <input id={id} type="text" defaultValue={value} className={`h-[38px] w-[120px] pl-2.5 pt-1 ${fieldBox}`} />
    </Row>
  );
}

function CheckRow({ label, checked }) {
  const id = useId();
  return <Row label={label} id={id}><Checkbox id={id} checked={checked} /></Row>;
}

function SelectRow({ label, value }) {
  const id = useId();
  return <Row label={label} id={id}><Select id={id} value={value} className="h-[38px] flex-1" /></Row>;
}

function PickRow({ label, icon, value }) {
  const id = useId();
  return (
    <Row label={label} id={id}>
      <div className={`flex h-[38px] min-w-0 flex-1 items-center pl-2 pr-1.5 ${fieldBox}`}>
        {icon && <span className="mr-2 flex w-[30px] shrink-0 justify-center">{icon}</span>}
        <input id={id} type="text" readOnly defaultValue={value} className={`w-full min-w-0 flex-1 bg-transparent outline-none ${icon ? '' : 'pl-0.5'}`} />
        <IconButton label="选取"><Pick /></IconButton>
      </div>
    </Row>
  );
}

function ButtonRow({ label, icon }) {
  const id = useId();
  return (
    <Row label={label} id={id}>
      <button id={id} type="button" className="ml-[9px] flex w-[26px] justify-center">{icon}</button>
    </Row>
  );
}

function Group({ title, lead, children }) {
  return (
    <div>
      <div className="flex h-[46px] items-center border-y-2 border-b-[#292929] border-t-[#1d1d1d] bg-[#383838] pl-3 pr-[15px]">
        <DownArrow />
        {lead}
        <h2 className={lead ? 'ml-2.5' : 'ml-4'}>{title}</h2>
        <IconButton label="菜单" className="ml-auto"><Menu /></IconButton>
      </div>
      <div className="pb-[7px] pt-[3px]">{children}</div>
    </div>
  );
}

function Inspector() {
  return (
    <section className="flex min-h-0 flex-col overflow-hidden rounded-l-[10px] bg-[#303030]">
      <PanelHeader className="pl-1.5 pr-4">
        <Tab icon={<PropsIcon />} active>属性设置</Tab>
      </PanelHeader>
      <div className="flex h-14 shrink-0 items-center border-b-2 border-[#1c1c1c] pl-[18px] pr-4">
        <button type="button" className="flex items-center gap-2"><Plus />增加组件</button>
        <div className="ml-auto flex items-center">
          <IconButton label="后退" className="mr-[37px]"><Svg w={14} h={24}><path d="M12 2L3 12l9 10" stroke="#c8c8c8" strokeWidth="3.200" strokeLinecap="round" /></Svg></IconButton>
          <IconButton label="前进" className="mr-[34px]"><Svg w={14} h={24}><path d="M2 2l9 10-9 10" stroke="#777" strokeWidth="3.200" strokeLinecap="round" /></Svg></IconButton>
          <IconButton label="锁定">
            <Svg w={23} h={30}>
              <rect x="1" y="14" width="21" height="15" rx="1.500" stroke="currentColor" strokeWidth="2" />
              <path d="M2 14v-3a9.500 9.500 0 0 1 18-3.500M11.500 18v7" stroke="currentColor" strokeWidth="2" />
              <circle cx="11.500" cy="19" r="2" fill="currentColor" />
            </Svg>
          </IconButton>
        </div>
      </div>
      <div className="flex min-h-0 flex-1 overflow-hidden">
        <div className="min-w-0 flex-1">
          <div className="-mt-[43px] pb-[7px]">
            <VecRow label="" x="" y="" />
            <VecRow label="Anchor" x="0" y="0" />
            <VecRow label="Scale" x="1" y="1" />
            <VecRow label="Skew" x="0" y="0" />
            <TextRow label="Rotation" value="0" />
            <CheckRow label="Visible" checked />
            <Row label="Alpha" id="alpha">
              <input
                id="alpha"
                type="range"
                min="0"
                max="1"
                step="0.01"
                defaultValue="1"
                className="ml-1 mr-5 h-7 min-w-0 flex-1 appearance-none bg-transparent [&::-webkit-slider-runnable-track]:h-1 [&::-webkit-slider-runnable-track]:bg-[#585858] [&::-webkit-slider-thumb]:-mt-3 [&::-webkit-slider-thumb]:size-7 [&::-webkit-slider-thumb]:appearance-none [&::-webkit-slider-thumb]:rounded-full [&::-webkit-slider-thumb]:border-2 [&::-webkit-slider-thumb]:border-[#1b1b1b] [&::-webkit-slider-thumb]:bg-[#4f6fae]"
              />
              <input type="text" aria-label="Alpha 数值" defaultValue="1" className={`h-10 w-[100px] shrink-0 pl-2.5 pt-1 ${fieldBox}`} />
            </Row>
          </div>
          <Group title="Sprite">
            <PickRow label="Texture" icon={<Avatar />} value="image" />
            <ButtonRow label="Graphics" icon={<Plus />} />
          </Group>
          <Group title="杂项">
            <TextRow label="Z Order" value="0" />
            <SelectRow label="Blend Mode" value="<未设置>" />
            <CheckRow label="Mouse Enabled" />
            <CheckRow label="Mouse Through" />
            <CheckRow label="Hit Test Prior" />
            <CheckRow label="Draw Call Optim" />
            <SelectRow label="Cache As" value="无" />
            <PickRow label="Mask" value="无 (节点)" />
            <ButtonRow label="Hit Area" icon={<Hexagon />} />
            <ButtonRow label="Filters" icon={<Plus />} />
          </Group>
          <Group
            title="Animator2D"
            lead={<div className="ml-2 flex items-center gap-2.5"><Checkbox label="启用 Animator2D" checked /><Reel size={26} /></div>}
          >
            <PickRow label="Controller" icon={<TwoD />} value="Sprite_NewAnimation" />
          </Group>
        </div>
        <div className="relative mt-1 w-[17px] shrink-0 rounded-t-full border-l-2 border-t-2 border-[#393939]">
          <div className="absolute bottom-0.5 right-px top-[182px] w-3.5 rounded-full bg-[#4c4e4d]" />
        </div>
      </div>
    </section>
  );
}

/* ---------- shell ---------- */

function TopBar() {
  return (
    <header className="grid h-16 shrink-0 grid-cols-[1fr_auto_1fr] items-start">
      <div className="mt-1.5 flex h-[54px] w-[165px] items-center rounded-tr-[9px] border-b-4 border-[#4a659f] bg-[#2f2f2f] pl-[13px] pt-0.5 text-white">
        <Monkey w={32} h={36} />
        <span className="ml-2.5">Scene</span>
        <span className="ml-3 size-4 rounded-full bg-[#4a6299]" />
      </div>
      <div className="mt-0.5 flex h-[54px] w-[208px] items-center rounded-[14px] bg-[#2e2e2e] pl-[18px] text-[#c2c2c2]">
        <IconButton label="运行"><Svg w={21} h={24}><path d="M0 2q1-2 3-1l17 10q1 1 0 2L3 23q-2 1-3-1z" fill="currentColor" /></Svg></IconButton>
        <IconButton label="浏览器运行" className="ml-[23px]">
          <Svg w={32} h={32}>
            <circle cx="16" cy="16" r="16" fill="currentColor" />
            <path d="M0 10.500h32M0 21.500h32M12.500 0C8 9 8 23 12.500 32M19.500 0C24 9 24 23 19.500 32" stroke="#2e2e2e" strokeWidth="2" />
            <path d="M16 0v3M16 29v3" stroke="#2e2e2e" strokeWidth="2" />
          </Svg>
        </IconButton>
        <IconButton label="手机预览" className="ml-[27px]">
          <Svg w={19} h={28}>
            <rect x="0" y="0" width="19" height="28" rx="2.500" fill="currentColor" />
            <path d="M3.500 4.500h12V22h-12z" fill="#2e2e2e" />
            <circle cx="9.500" cy="25" r="1.400" fill="#2e2e2e" />
          </Svg>
        </IconButton>
        <IconButton label="更多" className="ml-7"><Svg w={24} h={13}><path d="M0 0h24L12 13z" fill="currentColor" /></Svg></IconButton>
      </div>
      <IconButton label="用户" className="ml-auto mr-[26px] mt-[15px]">
        <Svg w={26} h={28}>
          <circle cx="13" cy="8" r="7" stroke="currentColor" strokeWidth="2" />
          <path d="M1 27c0-8 5-12 12-12s12 4 12 12" stroke="currentColor" strokeWidth="2" />
        </Svg>
      </IconButton>
    </header>
  );
}

export default function App() {
  return (
    <div className="relative flex h-screen flex-col overflow-hidden bg-[#161817] font-['Liberation_Sans','Noto_Sans_CJK_SC',sans-serif] text-2xl leading-7 text-[#bcbcbc]">
      <TopBar />
      <main className="grid min-h-0 flex-1 grid-cols-[463px_minmax(0,1fr)_599px] gap-2">
        <div className="flex min-h-0 flex-col gap-2">
          <Hierarchy />
          <Project />
        </div>
        <div className="flex min-h-0 flex-col gap-2">
          <SceneView />
          <Timeline />
        </div>
        <Inspector />
      </main>
      <svg width="30" height="44" viewBox="0 0 30 44" className="pointer-events-none absolute -bottom-4 right-[401px]" aria-hidden="true">
        <path d="M1 1v34l8-7 6 14 6-3-6-13h10z" fill="#fff" stroke="#000" strokeWidth="1.500" />
      </svg>
    </div>
  );
}
